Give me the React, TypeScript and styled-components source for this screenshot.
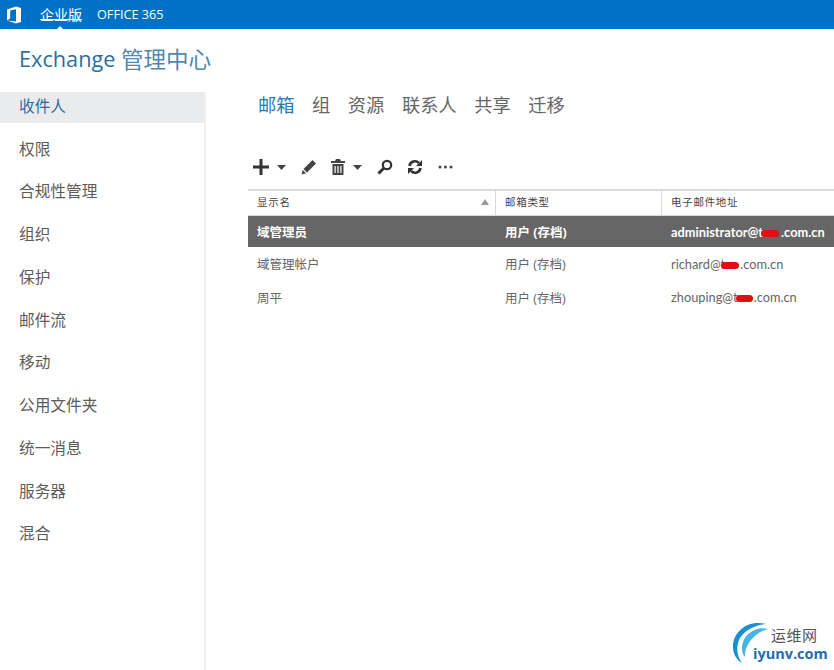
import styled, { createGlobalStyle } from "styled-components";

const FONT = `"Open Sans", "Noto Sans CJK SC", "Liberation Sans", sans-serif`;
const MAIL_FONT = `Lato, "Open Sans", sans-serif`;

const GlobalStyle = createGlobalStyle`
  html, body {
    margin: 0;
    padding: 0;
    height: 100%;
    background: #fff;
    overflow: hidden;
  }
  body {
    font-family: ${FONT};
  }
`;

const Page = styled.div`
  position: relative;
  width: 834px;
  height: 670px;
  overflow: hidden;
`;

const TopBar = styled.div`
  height: 29px;
  background: #0072c6;
  display: flex;
  align-items: center;
  color: #fff;
  font-size: 14px;
`;

const LogoBox = styled.div`
  width: 40px;
  padding-left: 6px;
  box-sizing: border-box;
  display: flex;
  align-items: center;
`;

const TopLink = styled.span<{ $active?: boolean }>`
  position: relative;
  margin-right: 15px;
  line-height: 27px;
  font-size: ${p => (p.$active ? "14px" : "12.700px")};
  ${p =>
    p.$active &&
    `
    &::before {
      content: "";
      position: absolute;
      left: 0;
      right: 0;
      top: 18px;
      height: 1px;
      background: #fff;
    }
    &::after {
      content: "";
      position: absolute;
      left: 16px;
      bottom: -2px;
      border: 4px solid transparent;
      border-top: 0;
      border-bottom-color: #fff;
    }
  `}
`;

const Title = styled.h1`
  margin: 0;
  height: 63px;
  box-sizing: border-box;
  padding: 0 0 4px 19px;
  display: flex;
  align-items: center;
  font-size: 21.700px;
  font-weight: 400;
  color: #2a6f9e;
  white-space: pre;
`;

const TitleCn = styled.span`
  font-size: 22.500px;
  font-weight: 400;
  color: #4f88b0;
`;

const Body = styled.div`
  display: flex;
  height: 578px;
`;

const Sidebar = styled.nav`
  width: 206px;
  flex: none;
  box-sizing: border-box;
  border-right: 2px solid #eef0f2;
  display: flex;
  flex-direction: column;
`;

const NavItem = styled.div<{ $active?: boolean }>`
  height: 42.750px;
  flex: none;
  box-sizing: border-box;
  padding: 0 0 4px 19px;
  display: flex;
  align-items: center;
  font-size: 15.700px;
  color: ${p => (p.$active ? "#2a6f9e" : "#5c5c5c")};
  ${p =>
    p.$active &&
    `
    height: 31px;
    margin-bottom: 5.700px;
    background: #e9ebed;
  `}
`;

const Main = styled.main`
  flex: 1;
  min-width: 0;
  padding-left: 42px;
`;

const Tabs = styled.div`
  display: flex;
  gap: 17.500px;
  height: 24px;
  align-items: center;
  margin: 0 0 0 10px;
  font-size: 18.300px;
`;

const Tab = styled.span<{ $active?: boolean }>`
  color: ${p => (p.$active ? "#2a7ab0" : "#666")};
`;

const Toolbar = styled.div`
  display: flex;
  align-items: center;
  height: 24px;
  margin-top: 39px;
  padding-left: 5px;
  color: #333;
`;

const ToolIcon = styled.svg<{ $before?: number }>`
  display: block;
  flex: none;
  margin-left: ${p => p.$before ?? 0}px;
`;

const Table = styled.div`
  margin-top: 10px;
  border-top: 2px solid #d8dadc;
`;

const Row = styled.div`
  display: grid;
  grid-template-columns: 248px 166px 1fr;
`;

const HeaderRow = styled(Row)`
  height: 24px;
  border-bottom: 1px solid #d8dadc;
  font-size: 10.500px;
  letter-spacing: 0.700px;
  color: #444;
`;

const HeadCell = styled.div<{ $divider?: boolean }>`
  display: flex;
  align-items: center;
  justify-content: space-between;
  padding: 0 8px 3px 9px;
  ${p => p.$divider && "border-right: 1px solid #d8dadc;"}
`;

const SortArrow = styled.span`
  width: 0;
  height: 0;
  margin-right: -2px;
  border: 4px solid transparent;
  border-top: 0;
  border-bottom: 6px solid #999;
`;

const DataRow = styled(Row)<{ $selected?: boolean }>`
  height: ${p => (p.$selected ? "31px" : "33.500px")};
  align-items: center;
  font-size: 12.500px;
  background: ${p => (p.$selected ? "#666" : "transparent")};
  color: ${p => (p.$selected ? "#fff" : "#666")};
  font-weight: ${p => (p.$selected ? 700 : 400)};
`;

const Cell = styled.div`
  padding-left: 9px;
  white-space: nowrap;
`;

const MailCell = styled(Cell)`
  font-family: ${MAIL_FONT};
  font-size: 12.800px;
`;

const Masked = styled.span<{ $w: number }>`
  position: relative;
  display: inline-block;
  width: ${p => p.$w}px;
`;

const RedMark = styled.span<{ $offset: number; $w: number }>`
  position: absolute;
  left: ${p => p.$offset}px;
  top: 6px;
  width: ${p => p.$w}px;
  height: 7px;
  border-radius: 4px;
  background: #e01010;
`;

const Watermark = styled.div`
  position: absolute;
  right: 0;
  bottom: 2px;
  width: 104px;
  height: 48px;
`;

const WatermarkCn = styled.span`
  position: absolute;
  left: 41px;
  top: 4px;
  font-size: 15px;
  color: #555;
  letter-spacing: 0.500px;
`;

const WatermarkEn = styled.span`
  position: absolute;
  left: 23px;
  top: 24px;
  font-size: 14.500px;
  font-weight: 700;
  color: #1c6fb0;
`;

const NAV = ["权限", "合规性管理", "组织", "保护", "邮件流", "移动", "公用文件夹", "统一消息", "服务器", "混合"];
const TABS = ["组", "资源", "联系人", "共享", "迁移"];

const OfficeLogo = () => (
  <svg width="16" height="18" viewBox="0 0 16 18">
    <path d="M1 3.600 10 .5l5 1.600v13.800L10 17.500 1 14.400l9 1.200V3.200L4.200 4.600v7.700L1 14.400z" fill="#fff" />
  </svg>
);

const Caret = ({ before }: { before: number }) => (
  <ToolIcon width="9" height="5" viewBox="0 0 9 5" $before={before}>
    <path d="M0 0h9L4.500 5z" fill="#444" />
  </ToolIcon>
);

const App = () => (
  <Page>
    <GlobalStyle />
    <TopBar>
      <LogoBox>
        <OfficeLogo />
      </LogoBox>
      <TopLink $active>企业版</TopLink>
      <TopLink>OFFICE 365</TopLink>
    </TopBar>
    <Title>
      Exchange <TitleCn>管理中心</TitleCn>
    </Title>
    <Body>
      <Sidebar>
        <NavItem $active>收件人</NavItem>
        {NAV.map(n => (
          <NavItem key={n}>{n}</NavItem>
        ))}
      </Sidebar>
      <Main>
        <Tabs>
          <Tab $active>邮箱</Tab>
          {TABS.map(t => (
            <Tab key={t}>{t}</Tab>
          ))}
        </Tabs>
        <Toolbar>
          <ToolIcon width="16" height="16" viewBox="0 0 16 16">
            <path d="M6.500 0h3v6.500h6.500v3H9.500V16h-3V9.500H0v-3h6.500z" fill="#333" />
          </ToolIcon>
          <Caret before={8} />
          <ToolIcon width="16" height="16" viewBox="0 0 16 16" $before={15}>
            <path d="M11.500 1 15 4.500 6 13.500 2.500 10zM1.800 11l3.200 3.200L.5 15.500z" fill="#444" />
          </ToolIcon>
          <ToolIcon width="14" height="16" viewBox="0 0 14 16" $before={14}>
            <path
              d="M5 0h4l1 2h4v2H0V2h4zM1.500 5h11v11h-11zM3.500 7v7h1.200V7zM6.400 7v7h1.200V7zM9.300 7v7h1.200V7z"
              fill="#444"
              fillRule="evenodd"
            />
          </ToolIcon>
          <Caret before={8} />
          <ToolIcon width="16" height="16" viewBox="0 0 16 16" $before={15}>
            <circle cx="10" cy="6" r="4.200" fill="none" stroke="#333" strokeWidth="2.200" />
            <path d="M7 9 1.500 14.500" stroke="#333" strokeWidth="3" />
          </ToolIcon>
          <ToolIcon width="16" height="16" viewBox="0 0 16 16" $before={14}>
            <path
              d="M2.500 7a5.500 5.500 0 0 1 9.400-3M13.500 9a5.500 5.500 0 0 1-9.400 3"
              fill="none"
              stroke="#333"
              strokeWidth="2.600"
            />
            <path d="M15 1v6H9zM1 15V9h6z" fill="#333" />
          </ToolIcon>
          <ToolIcon width="15" height="4" viewBox="0 0 15 4" $before={15}>
            <circle cx="2" cy="2" r="1.500" fill="#444" />
            <circle cx="7.500" cy="2" r="1.500" fill="#444" />
            <circle cx="13" cy="2" r="1.500" fill="#444" />
          </ToolIcon>
        </Toolbar>
        <Table>
          <HeaderRow>
            <HeadCell $divider>
              显示名
              <SortArrow />
            </HeadCell>
            <HeadCell $divider>邮箱类型</HeadCell>
            <HeadCell>电子邮件地址</HeadCell>
          </HeaderRow>
          <DataRow $selected>
            <Cell>域管理员</Cell>
            <Cell>用户 (存档)</Cell>
            <MailCell>
              administrator@t
              <Masked $w={18}>
                &nbsp;
                <RedMark $offset={-2} $w={18} />
              </Masked>
              .com.cn
            </MailCell>
          </DataRow>
          <DataRow>
            <Cell>域管理帐户</Cell>
            <Cell>用户 (存档)</Cell>
            <MailCell>
              richard@t
              <Masked $w={15}>
                &nbsp;
                <RedMark $offset={-4} $w={18} />
              </Masked>
              .com.cn
            </MailCell>
          </DataRow>
          <DataRow>
            <Cell>周平</Cell>
            <Cell>用户 (存档)</Cell>
            <MailCell>
              zhouping@t
              <Masked $w={16}>
                &nbsp;
                <RedMark $offset={-2} $w={17} />
              </Masked>
              .com.cn
            </MailCell>
          </DataRow>
        </Table>
      </Main>
    </Body>
    <Watermark>
      <svg width="44" height="46" viewBox="0 0 44 46">
        <path d="M36 4C18 -1 2 12 3 28c.5 7 4 12 9 15C7 36 6 28 9 20 13 11 24 5 36 4z" fill="#1c8fd0" />
        <path d="M38 9C26 6 13 14 12 27c-.3 4 1 8 3 10-1-10 8-24 23-28z" fill="#46b4e4" />
      </svg>
      <WatermarkCn>运维网</WatermarkCn>
      <WatermarkEn>iyunv.com</WatermarkEn>
    </Watermark>
  </Page>
);

export default App;
